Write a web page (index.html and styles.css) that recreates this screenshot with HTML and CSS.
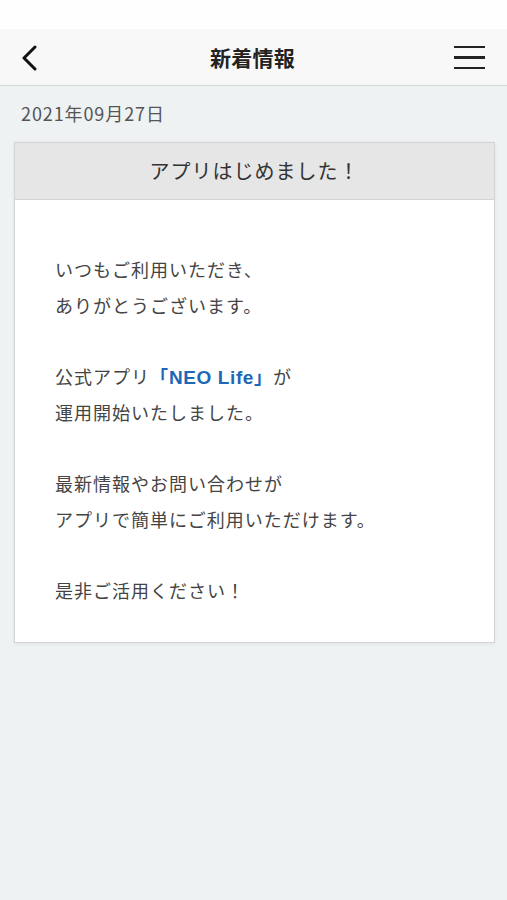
FILE: index.html
```html
<!DOCTYPE html>
<html lang="ja">
<head>
    <meta charset="UTF-8">
    <meta name="viewport" content="width=device-width, initial-scale=1.0">
    <title>新着情報</title>
    <link rel="stylesheet" href="styles.css">
</head>
<body>
    <div class="status-bar"></div>
    <header class="nav">
        <button class="nav-btn back" type="button" aria-label="戻る">
            <svg width="20" height="26" viewBox="0 0 20 26">
                <path d="M15 2 L4 13 L15 24" fill="none" stroke="#111" stroke-width="3" stroke-linecap="round" stroke-linejoin="round"/>
            </svg>
        </button>
        <h1 class="nav-title">新着情報</h1>
        <button class="nav-btn menu" type="button" aria-label="メニュー">
            <span></span><span></span><span></span>
        </button>
    </header>
    <main class="content">
        <div class="date">2021年09月27日</div>
        <article class="card">
            <div class="card-head">アプリはじめました！</div>
            <div class="card-body">
                <p>いつもご利用いただき、<br>ありがとうございます。</p>
                <p>公式アプリ<span class="app-name">「<b>NEO Life</b>」</span>が<br>運用開始いたしました。</p>
                <p>最新情報やお問い合わせが<br>アプリで簡単にご利用いただけます。</p>
                <p>是非ご活用ください！</p>
            </div>
        </article>
    </main>
</body>
</html>
```
FILE: styles.css
```css
body {
    margin: 0;
    font-family: "Noto Sans CJK JP", "Noto Sans", sans-serif;
    background-color: #eef2f3;
    color: #444;
    min-height: 900px;
}
.status-bar {
    height: 29px;
    background: #fefefe;
}
.nav {
    height: 56px;
    display: flex;
    align-items: center;
    padding: 0 22px 0 20px;
    background: #f8f8f8;
    border-bottom: 1px solid #d6d8d8;
}
.nav-btn {
    background: none;
    border: none;
    padding: 0;
    cursor: pointer;
    width: 31px;
}
.back {
    height: 26px;
    display: flex;
    margin-top: 2px;
}
.nav-title {
    flex: 1;
    margin: 0;
    text-align: center;
    font-size: 21px;
    font-weight: bold;
    color: #222;
    letter-spacing: 0.3px;
}
.menu {
    display: flex;
    flex-direction: column;
    gap: 8px;
    margin-top: 1px;
}
.menu span {
    display: block;
    height: 2.5px;
    background: #222;
}
.content {
    padding: 14px 14px 0;
}
.date {
    font-size: 18px;
    color: #555;
    padding-left: 7px;
    line-height: 26px;
    letter-spacing: 0.9px;
}
.card {
    margin-top: 16px;
    width: 479px;
    background: #fff;
    border: 1px solid #d2d4d4;
    box-shadow: 0 1px 4px rgba(0, 0, 0, 0.06);
}
.card-head {
    height: 56px;
    line-height: 56px;
    text-align: center;
    font-size: 20px;
    color: #333;
    letter-spacing: 1px;
    background: #e6e6e6;
    border-bottom: 1px solid #d2d4d4;
}
.card-body {
    padding: 52px 20px 34px 40px;
    font-size: 18px;
    line-height: 35.5px;
    color: #444;
    letter-spacing: 1px;
}
.card-body p {
    margin: 0 0 35.5px;
}
.card-body p:last-child {
    margin-bottom: 0;
}
.app-name {
    color: #1d68b4;
    font-weight: bold;
}
.app-name b {
    font-family: "Liberation Sans", sans-serif;
    font-size: 19px;
    letter-spacing: 0.6px;
}
```
